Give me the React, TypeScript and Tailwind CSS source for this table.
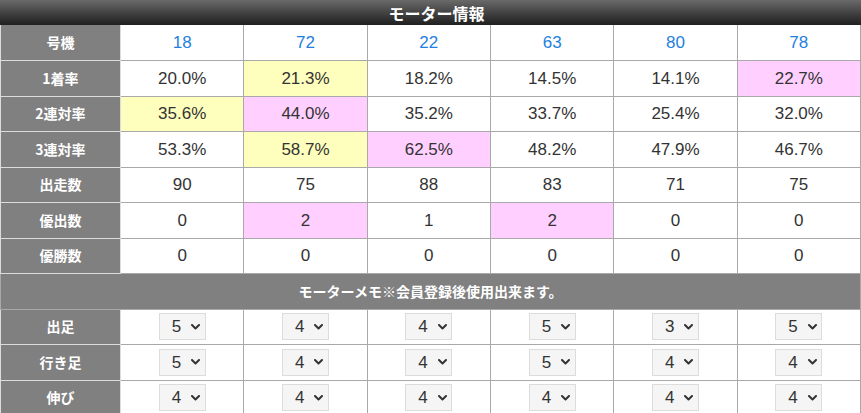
import React from "react";

type Hl = "" | "y" | "p";

const motors = ["18", "72", "22", "63", "80", "78"];

const statRows: { label: string; values: [string, Hl][] }[] = [
  { label: "1着率", values: [["20.0%", ""], ["21.3%", "y"], ["18.2%", ""], ["14.5%", ""], ["14.1%", ""], ["22.7%", "p"]] },
  { label: "2連対率", values: [["35.6%", "y"], ["44.0%", "p"], ["35.2%", ""], ["33.7%", ""], ["25.4%", ""], ["32.0%", ""]] },
  { label: "3連対率", values: [["53.3%", ""], ["58.7%", "y"], ["62.5%", "p"], ["48.2%", ""], ["47.9%", ""], ["46.7%", ""]] },
  { label: "出走数", values: [["90", ""], ["75", ""], ["88", ""], ["83", ""], ["71", ""], ["75", ""]] },
  { label: "優出数", values: [["0", ""], ["2", "p"], ["1", ""], ["2", "p"], ["0", ""], ["0", ""]] },
  { label: "優勝数", values: [["0", ""], ["0", ""], ["0", ""], ["0", ""], ["0", ""], ["0", ""]] },
];

const memoRows: { label: string; values: string[] }[] = [
  { label: "出足", values: ["5", "4", "4", "5", "3", "5"] },
  { label: "行き足", values: ["5", "4", "4", "5", "4", "4"] },
  { label: "伸び", values: ["4", "4", "4", "4", "4", "4"] },
];

const labelCls =
  "h-[35.5px] border border-[#dcdcdc] bg-[#808080] text-white text-[14px] font-bold text-center align-middle p-0";
const cellBase =
  "h-[35.5px] border border-[#a9a9a9] text-center align-middle p-0 text-[17px] text-[#333]";

function bgFor(h: Hl) {
  if (h === "y") return "bg-[#ffffbd]";
  if (h === "p") return "bg-[#ffd0ff]";
  return "bg-white";
}

function FakeSelect({ v }: { v: string }) {
  return (
    <div className="inline-flex items-center h-[27px] w-[47px] border border-[#dcdcdc] bg-[#f5f5f5] pl-[12px] align-middle">
      <span className="text-[17px] text-[#333] leading-none">{v}</span>
      <svg className="ml-[10px]" width="9" height="6" viewBox="0 0 9 6">
        <path d="M1 1 L4.5 4.5 L8 1" fill="none" stroke="#333" strokeWidth="2" strokeLinecap="round" strokeLinejoin="round" />
      </svg>
    </div>
  );
}

export default function App() {
  return (
    <div
      className="w-[861px] h-[413px] overflow-hidden bg-white"
      style={{ fontFamily: '"Liberation Sans", Arial, "Noto Sans CJK JP", sans-serif' }}
    >
      <div
        className="h-[25px] flex items-center justify-center pl-3 bg-gradient-to-b from-[#6a6a6a] to-[#202020] text-white font-bold text-[16px]"
        style={{ fontFamily: '"Noto Sans CJK JP", sans-serif' }}
      >
        モーター情報
      </div>
      <table className="w-full table-fixed border-collapse">
        <colgroup>
          <col className="w-[120px]" />
          <col />
          <col />
          <col />
          <col />
          <col />
          <col />
        </colgroup>
        <tbody>
          <tr>
            <th className={labelCls + " border-t-0"} style={{ fontFamily: '"Noto Sans CJK JP", sans-serif' }}>号機</th>
            {motors.map((m, i) => (
              <td key={i} className={cellBase + " bg-white border-t-0 !text-[#1f7fe0]"}>
                {m}
              </td>
            ))}
          </tr>
          {statRows.map((r) => (
            <tr key={r.label}>
              <th className={labelCls} style={{ fontFamily: '"Noto Sans CJK JP", sans-serif' }}>{r.label}</th>
              {r.values.map(([v, h], i) => (
                <td key={i} className={cellBase + " " + bgFor(h)}>
                  {v}
                </td>
              ))}
            </tr>
          ))}
          <tr>
            <td
              colSpan={7}
              className="h-[35.5px] border border-[#a9a9a9] bg-[#808080] text-white text-[14px] font-bold text-center align-middle p-0"
              style={{ fontFamily: '"Noto Sans CJK JP", sans-serif' }}
            >
              モーターメモ※会員登録後使用出来ます。
            </td>
          </tr>
          {memoRows.map((r) => (
            <tr key={r.label}>
              <th className={labelCls} style={{ fontFamily: '"Noto Sans CJK JP", sans-serif' }}>{r.label}</th>
              {r.values.map((v, i) => (
                <td key={i} className={cellBase + " bg-white"}>
                  <FakeSelect v={v} />
                </td>
              ))}
            </tr>
          ))}
        </tbody>
      </table>
    </div>
  );
}
